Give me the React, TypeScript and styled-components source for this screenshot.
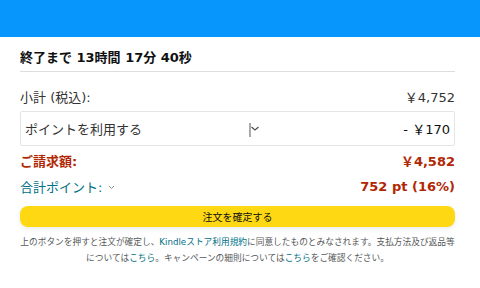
import React from 'react';
import styled, { createGlobalStyle } from 'styled-components';

const GlobalStyle = createGlobalStyle`
  html, body {
    margin: 0;
    padding: 0;
    background: #ffffff;
  }
  body {
    font-family: "DejaVu Sans", "Noto Sans CJK JP", sans-serif;
    color: #0f1111;
  }
`;

const App = () => {
  return (
    <>
      <GlobalStyle />
      <Page>
        <TopBar />
        <Content>
          <Countdown>終了まで 13時間 17分 40秒</Countdown>

          <SummaryRow>
            <Label>小計 (税込):</Label>
            <Amount>￥4,752</Amount>
          </SummaryRow>

          <PointBox>
            <Label>ポイントを利用する</Label>
            <CaretIcon width="12" height="16" viewBox="0 0 12 16">
              <line x1="1" y1="1" x2="1" y2="15" stroke="#6f7373" strokeWidth="1.2" />
              <polyline points="2.5,5 6,8 9.5,5" fill="none" stroke="#4a4d4d" strokeWidth="1.1" />
            </CaretIcon>
            <BoxValue>- ￥170</BoxValue>
          </PointBox>

          <SummaryRow $gap={2}>
            <TotalLabel>ご請求額:</TotalLabel>
            <TotalAmount>￥4,582</TotalAmount>
          </SummaryRow>

          <SummaryRow $gap={2}>
            <PointsToggle>
              合計ポイント:
              <svg width="7" height="5" viewBox="0 0 7 5">
                <polyline points="1,1 3.5,3.5 6,1" fill="none" stroke="#8a8f8f" strokeWidth="1" />
              </svg>
            </PointsToggle>
            <TotalAmount>752 pt (16%)</TotalAmount>
          </SummaryRow>

          <ConfirmButton>注文を確定する</ConfirmButton>

          <Notice>
            上のボタンを押すと注文が確定し、<Link>Kindleストア利用規約</Link>に同意したものとみなされます。支払方法及び返品等
            <br />
            については<Link>こちら</Link>。キャンペーンの細則については<Link>こちら</Link>をご確認ください。
          </Notice>
        </Content>
      </Page>
    </>
  );
};

export default App;

const Page = styled.div`
  width: 480px;
  height: 288px;
  overflow: hidden;
  background: #ffffff;
`;

const TopBar = styled.div`
  height: 37px;
  background: #0796fc;
`;

const Content = styled.div`
  padding: 0 25px 0 20px;
  display: flex;
  flex-direction: column;
`;

const Countdown = styled.div`
  height: 35px;
  padding-top: 5px;
  box-sizing: border-box;
  display: flex;
  align-items: center;
  font-size: 13px;
  font-weight: 700;
  color: #0f1111;
  border-bottom: 1px solid #dddddd;
`;

const SummaryRow = styled.div<{ $gap?: number }>`
  height: 24px;
  margin-top: ${({ $gap }) => ($gap ?? 12)}px;
  display: flex;
  align-items: center;
  justify-content: space-between;
`;

const Label = styled.span`
  font-size: 13px;
  color: #333333;
`;

const Amount = styled.span`
  font-size: 13px;
  color: #333333;
`;

const PointBox = styled.div`
  margin-top: 3px;
  height: 35px;
  box-sizing: border-box;
  border: 1px solid #e3e6e6;
  border-radius: 2px;
  padding: 0 4px;
  display: grid;
  grid-template-columns: 224px auto 1fr;
  align-items: center;
`;

const CaretIcon = styled.svg`
  display: block;
  margin-top: 3px;
`;

const BoxValue = styled.span`
  justify-self: end;
  font-size: 13px;
  color: #0f1111;
`;

const TotalLabel = styled.span`
  font-size: 13px;
  font-weight: 700;
  color: #b12704;
`;

const TotalAmount = styled.span`
  font-size: 13px;
  font-weight: 700;
  color: #b12704;
`;

const PointsToggle = styled.span`
  display: flex;
  align-items: center;
  gap: 6px;
  font-size: 13px;
  color: #007185;

  svg {
    margin-top: 2px;
  }
`;

const ConfirmButton = styled.button`
  margin-top: 8px;
  height: 21px;
  border: none;
  border-radius: 8px;
  background: #ffd814;
  box-shadow: 0 2px 5px rgba(213, 217, 217, 0.5);
  font-family: inherit;
  font-size: 10px;
  color: #0f1111;
  padding: 0;
  cursor: pointer;
`;

const Notice = styled.p`
  margin: 7px 0 0;
  font-size: 8.7px;
  line-height: 16px;
  color: #565959;
  text-align: center;
  white-space: nowrap;
`;

const Link = styled.span`
  color: #007185;
`;
